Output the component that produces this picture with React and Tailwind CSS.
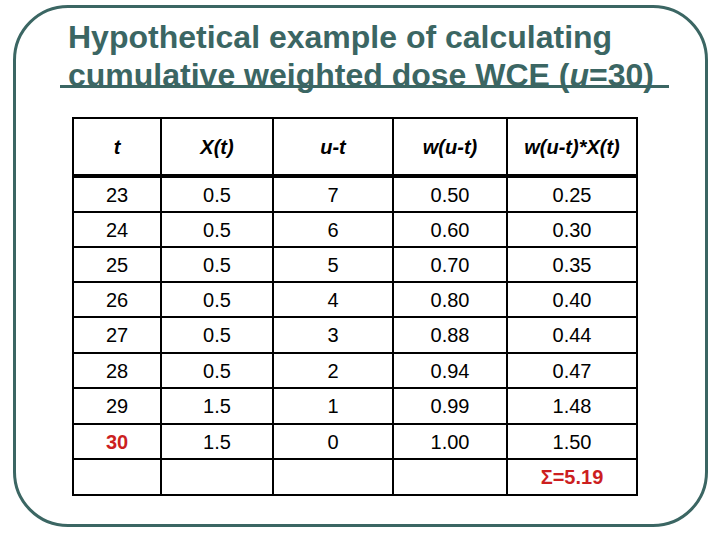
import React from "react";

const rows = [
  ["23", "0.5", "7", "0.50", "0.25"],
  ["24", "0.5", "6", "0.60", "0.30"],
  ["25", "0.5", "5", "0.70", "0.35"],
  ["26", "0.5", "4", "0.80", "0.40"],
  ["27", "0.5", "3", "0.88", "0.44"],
  ["28", "0.5", "2", "0.94", "0.47"],
  ["29", "1.5", "1", "0.99", "1.48"],
  ["30", "1.5", "0", "1.00", "1.50"],
];

const heads = ["t", "X(t)", "u-t", "w(u-t)", "w(u-t)*X(t)"];

export default function App() {
  return (
    <div className="w-[720px] h-[540px] bg-white overflow-hidden pt-[5px] pl-[13px] font-['Liberation_Sans',Arial,sans-serif]">
      <div className="w-[695px] h-[522px] border-[3px] border-[#3b6663] rounded-[55px] pt-[10px]">
        {/* title */}
        <div className="ml-[44px] w-[609px] h-[70px] border-b-[3px] border-[#3b6663] pl-[8px] text-[32px] leading-[38px] font-bold text-[#3b6663] whitespace-nowrap">
          <div>Hypothetical example of calculating</div>
          <div>
            cumulative weighted dose WCE (<span className="italic">u</span>=30)
          </div>
        </div>

        {/* table */}
        <div className="ml-[56px] mt-[29px] w-[566px] border-l-2 border-t-2 border-black text-[20px] text-black">
          <div className="grid grid-cols-[88px_112px_120px_114px_130px]">
            {heads.map((h) => (
              <div
                key={h}
                className="h-[59px] border-r-2 border-b-4 border-black flex items-center justify-center italic font-bold"
              >
                {h}
              </div>
            ))}
          </div>
          {rows.map((r, i) => (
            <div
              key={r[0]}
              className={
                "grid grid-cols-[88px_112px_120px_114px_130px] " +
                (i === 4 || i === 6 ? "h-[36px]" : "h-[35px]")
              }
            >
              {r.map((c, j) => (
                <div
                  key={j}
                  className={
                    "border-r-2 border-b-2 border-black flex items-center justify-center" +
                    (i === 7 && j === 0 ? " text-[#cc1f1f] font-bold" : "")
                  }
                >
                  {c}
                </div>
              ))}
            </div>
          ))}
          <div className="grid grid-cols-[88px_112px_120px_114px_130px] h-[36px]">
            <div className="border-r-2 border-b-2 border-black" />
            <div className="border-r-2 border-b-2 border-black" />
            <div className="border-r-2 border-b-2 border-black" />
            <div className="border-r-2 border-b-2 border-black" />
            <div className="border-r-2 border-b-2 border-black flex items-center justify-center text-[#cc1f1f] font-bold">
              Σ=5.19
            </div>
          </div>
        </div>
      </div>
    </div>
  );
}
